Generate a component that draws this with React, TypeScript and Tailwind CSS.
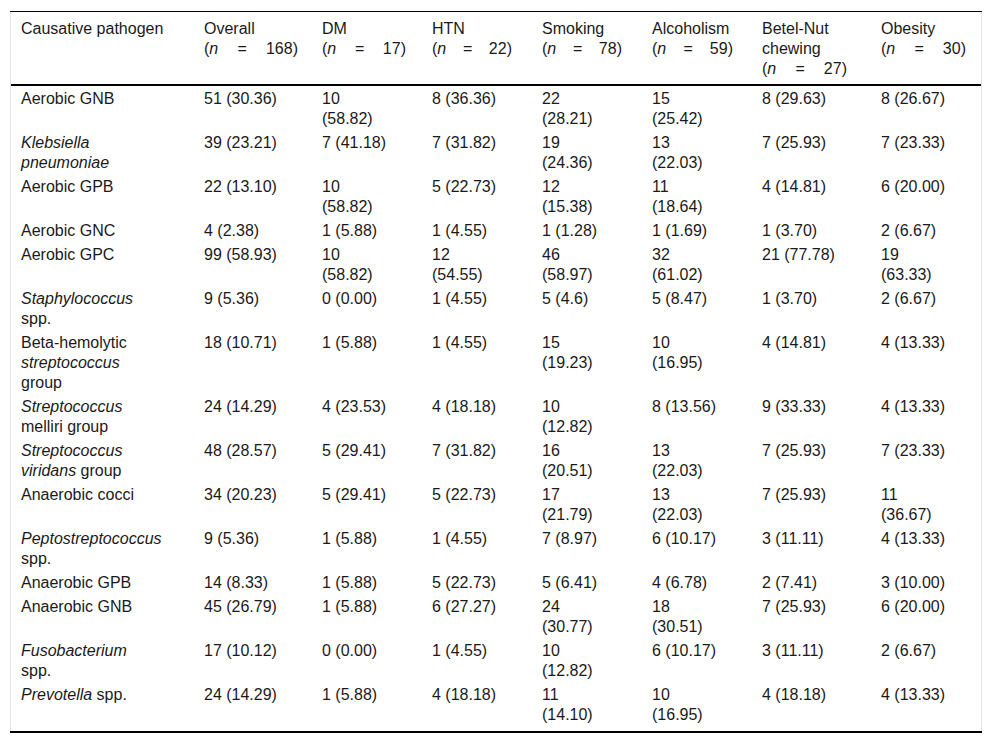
import React from "react";

type Cell = React.ReactNode[];

const I = ({ children }: { children: React.ReactNode }) => <i>{children}</i>;

const cols = [183, 118, 110, 110, 110, 110, 119, 110];
const nWidths = [0, 94, 84, 80, 80, 81, 85, 85];

const NLine = ({ n, w }: { n: string; w: number }) => (
  <div className="flex justify-between" style={{ width: w }}>
    <span>
      (<I>n</I>
    </span>
    <span>=</span>
    <span>{n})</span>
  </div>
);

const header: { lines: string[]; n?: string }[] = [
  { lines: ["Causative pathogen"] },
  { lines: ["Overall"], n: "168" },
  { lines: ["DM"], n: "17" },
  { lines: ["HTN"], n: "22" },
  { lines: ["Smoking"], n: "78" },
  { lines: ["Alcoholism"], n: "59" },
  { lines: ["Betel-Nut", "chewing"], n: "27" },
  { lines: ["Obesity"], n: "30" },
];

const s = (v: string): Cell => v.split("/");

const rows: Cell[][] = [
  [["Aerobic GNB"], s("51 (30.36)"), s("10/(58.82)"), s("8 (36.36)"), s("22/(28.21)"), s("15/(25.42)"), s("8 (29.63)"), s("8 (26.67)")],
  [[<I key="a">Klebsiella</I>, <I key="b">pneumoniae</I>], s("39 (23.21)"), s("7 (41.18)"), s("7 (31.82)"), s("19/(24.36)"), s("13/(22.03)"), s("7 (25.93)"), s("7 (23.33)")],
  [["Aerobic GPB"], s("22 (13.10)"), s("10/(58.82)"), s("5 (22.73)"), s("12/(15.38)"), s("11/(18.64)"), s("4 (14.81)"), s("6 (20.00)")],
  [["Aerobic GNC"], s("4 (2.38)"), s("1 (5.88)"), s("1 (4.55)"), s("1 (1.28)"), s("1 (1.69)"), s("1 (3.70)"), s("2 (6.67)")],
  [["Aerobic GPC"], s("99 (58.93)"), s("10/(58.82)"), s("12/(54.55)"), s("46/(58.97)"), s("32/(61.02)"), s("21 (77.78)"), s("19/(63.33)")],
  [[<I key="a">Staphylococcus</I>, "spp."], s("9 (5.36)"), s("0 (0.00)"), s("1 (4.55)"), s("5 (4.6)"), s("5 (8.47)"), s("1 (3.70)"), s("2 (6.67)")],
  [["Beta-hemolytic", <I key="b">streptococcus</I>, "group"], s("18 (10.71)"), s("1 (5.88)"), s("1 (4.55)"), s("15/(19.23)"), s("10/(16.95)"), s("4 (14.81)"), s("4 (13.33)")],
  [[<I key="a">Streptococcus</I>, "melliri group"], s("24 (14.29)"), s("4 (23.53)"), s("4 (18.18)"), s("10/(12.82)"), s("8 (13.56)"), s("9 (33.33)"), s("4 (13.33)")],
  [[<I key="a">Streptococcus</I>, <span key="b"><I>viridans</I> group</span>], s("48 (28.57)"), s("5 (29.41)"), s("7 (31.82)"), s("16/(20.51)"), s("13/(22.03)"), s("7 (25.93)"), s("7 (23.33)")],
  [["Anaerobic cocci"], s("34 (20.23)"), s("5 (29.41)"), s("5 (22.73)"), s("17/(21.79)"), s("13/(22.03)"), s("7 (25.93)"), s("11/(36.67)")],
  [[<I key="a">Peptostreptococcus</I>, "spp."], s("9 (5.36)"), s("1 (5.88)"), s("1 (4.55)"), s("7 (8.97)"), s("6 (10.17)"), s("3 (11.11)"), s("4 (13.33)")],
  [["Anaerobic GPB"], s("14 (8.33)"), s("1 (5.88)"), s("5 (22.73)"), s("5 (6.41)"), s("4 (6.78)"), s("2 (7.41)"), s("3 (10.00)")],
  [["Anaerobic GNB"], s("45 (26.79)"), s("1 (5.88)"), s("6 (27.27)"), s("24/(30.77)"), s("18/(30.51)"), s("7 (25.93)"), s("6 (20.00)")],
  [[<I key="a">Fusobacterium</I>, "spp."], s("17 (10.12)"), s("0 (0.00)"), s("1 (4.55)"), s("10/(12.82)"), s("6 (10.17)"), s("3 (11.11)"), s("2 (6.67)")],
  [[<span key="a"><I>Prevotella</I> spp.</span>], s("24 (14.29)"), s("1 (5.88)"), s("4 (18.18)"), s("11/(14.10)"), s("10/(16.95)"), s("4 (18.18)"), s("4 (13.33)")],
];

export default function App() {
  return (
    <div
      className="min-h-[743px] w-[992px] bg-white pt-[11px] pl-[10px] text-[16px] leading-[20px] text-[#1a1a1a]"
      style={{ fontFamily: '"Liberation Sans", Arial, sans-serif' }}
    >
      <div className="w-[972px] border-t border-black">
        <div className="border-x border-[#e4e4e4] pb-[5px]">
          <table className="table-fixed border-collapse w-[970px]">
            <colgroup>
              {cols.map((w, i) => (
                <col key={i} style={{ width: w }} />
              ))}
            </colgroup>
            <thead>
              <tr className="border-b-2 border-black">
                {header.map((h, i) => (
                  <th key={i} className="pl-[10px] pt-[7px] pb-[5px] text-left align-top font-normal">
                    {h.lines.map((l, j) => (
                      <div key={j}>{l}</div>
                    ))}
                    {h.n && <NLine n={h.n} w={nWidths[i]} />}
                  </th>
                ))}
              </tr>
            </thead>
            <tbody>
              {rows.map((r, ri) => (
                <tr key={ri}>
                  {r.map((c, ci) => (
                    <td key={ci} className="pl-[10px] pt-[3px] pb-[1px] align-top whitespace-nowrap">
                      {c.map((l, li) => (
                        <div key={li}>{l}</div>
                      ))}
                    </td>
                  ))}
                </tr>
              ))}
            </tbody>
          </table>
        </div>
        <div className="h-[2px] bg-black" />
      </div>
    </div>
  );
}
